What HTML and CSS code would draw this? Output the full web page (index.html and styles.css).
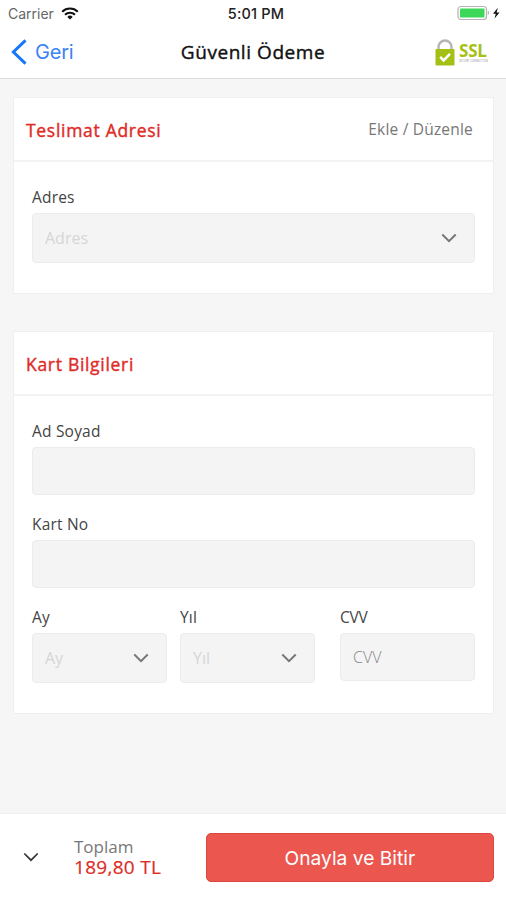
FILE: index.html
```html
<!DOCTYPE html>
<html lang="tr">
<head>
    <meta charset="UTF-8">
    <meta name="viewport" content="width=device-width, initial-scale=1.0">
    <title>Güvenli Ödeme</title>
    <link rel="stylesheet" href="styles.css">
</head>
<body>

    <div class="screen">
        <div class="status-bar">
            <div class="carrier">
                <span>Carrier</span>
                <svg width="18" height="13" viewBox="0 0 18 13" fill="none" stroke="#111" stroke-width="2.1">
                    <path d="M1.2 4.7a11.2 11.2 0 0 1 15.6 0"/>
                    <path d="M4 7.8a7.2 7.2 0 0 1 10 0"/>
                    <path d="M9 12.6L6.3 9.9a3.9 3.9 0 0 1 5.4 0z" fill="#111" stroke="none"/>
                </svg>
            </div>
            <span class="clock">5:01 PM</span>
            <div class="battery">
                <svg width="44" height="16" viewBox="0 0 44 16">
                    <rect x="1" y="1.5" width="28.5" height="13" rx="3" fill="#fff" stroke="#b4b4b4" stroke-width="1.2"/>
                    <rect x="3" y="3.5" width="24.5" height="9" rx="1" fill="#3dd75a"/>
                    <path d="M30.8 5.8c1.6.6 1.6 3.8 0 4.4z" fill="#b4b4b4"/>
                    <path d="M40.8 2.8l-4.8 6h2.8l-1.3 4.7 5-6.1h-2.9z" fill="#111"/>
                </svg>
            </div>
        </div>

        <header class="nav-bar">
            <a href="#" class="back">
                <svg width="16" height="26" viewBox="0 0 16 26" fill="none" stroke="#1478f8" stroke-width="3">
                    <path d="M14.5 1.4L2.4 13l12.1 11.6"/>
                </svg>
                <span>Geri</span>
            </a>
            <h1>Güvenli Ödeme</h1>
            <div class="ssl">
                <svg width="20" height="28" viewBox="0 0 20 28">
                    <path d="M3.5 13V9a6.5 6.5 0 0 1 13 0v4" fill="none" stroke="#b5b5b5" stroke-width="2.4"/>
                    <rect x="0.5" y="11" width="19" height="16.5" rx="1" fill="#a5c014"/>
                    <path d="M5.2 18.8l3.4 3.6 6.4-6.6" fill="none" stroke="#fff" stroke-width="2.5"/>
                </svg>
                <div class="ssl-text">
                    <b>SSL</b>
                    <small>SECURE CONNECTION</small>
                </div>
            </div>
        </header>

        <main>
            <section class="card address">
                <div class="card-head">
                    <h2>Teslimat Adresi</h2>
                    <a href="#">Ekle / Düzenle</a>
                </div>
                <div class="card-body">
                    <div class="group">
                        <label>Adres</label>
                        <div class="field select">
                            <span>Adres</span>
                            <svg class="chevron" width="16" height="10" viewBox="0 0 16 10"><path d="M1.3 1.5L8 8.2l6.7-6.7"/></svg>
                        </div>
                    </div>
                </div>
            </section>

            <section class="card payment">
                <div class="card-head">
                    <h2>Kart Bilgileri</h2>
                </div>
                <div class="card-body">
                    <div class="group">
                        <label>Ad Soyad</label>
                        <div class="field"></div>
                    </div>
                    <div class="group">
                        <label>Kart No</label>
                        <div class="field"></div>
                    </div>
                    <div class="row">
                        <div class="group">
                            <label>Ay</label>
                            <div class="field select">
                                <span>Ay</span>
                                <svg class="chevron" width="16" height="10" viewBox="0 0 16 10"><path d="M1.3 1.5L8 8.2l6.7-6.7"/></svg>
                            </div>
                        </div>
                        <div class="group">
                            <label>Yıl</label>
                            <div class="field select">
                                <span>Yıl</span>
                                <svg class="chevron" width="16" height="10" viewBox="0 0 16 10"><path d="M1.3 1.5L8 8.2l6.7-6.7"/></svg>
                            </div>
                        </div>
                        <div class="group cvv">
                            <label>CVV</label>
                            <div class="field"><span>CVV</span></div>
                        </div>
                    </div>
                </div>
            </section>
        </main>

        <footer class="checkout">
            <svg class="chevron dark" width="16" height="10" viewBox="0 0 16 10"><path d="M1.3 1.5L8 8.2l6.7-6.7"/></svg>
            <div class="total">
                <span>Toplam</span>
                <strong>189,80 TL</strong>
            </div>
            <button class="confirm-btn">Onayla ve Bitir</button>
        </footer>
    </div>

</body>
</html>
```

FILE: styles.css
```css
* {
    margin: 0;
    padding: 0;
    box-sizing: border-box;
}
body {
    font-family: "Open Sans", sans-serif;
    background-color: #f6f6f6;
}
svg {
    display: block;
    flex: none;
}
.screen {
    width: 506px;
    height: 900px;
    display: flex;
    flex-direction: column;
}
.status-bar {
    height: 26px;
    padding: 0 5px 0 8px;
    background-color: #fff;
    display: grid;
    grid-template-columns: 1fr auto 1fr;
    align-items: center;
    font-family: Inter, sans-serif;
}
.carrier {
    display: flex;
    align-items: center;
    gap: 7px;
    font-size: 14px;
    color: #666;
}
.clock {
    padding-left: 3px;
    font-size: 14.5px;
    font-weight: 500;
    letter-spacing: 0.2px;
    color: #222;
}
.battery {
    display: flex;
    justify-content: flex-end;
}
.nav-bar {
    height: 53px;
    padding: 0 18px 0 11px;
    background-color: #fff;
    border-bottom: 1px solid #dedede;
    display: grid;
    grid-template-columns: 1fr auto 1fr;
    align-items: center;
}
.back {
    display: flex;
    align-items: center;
    gap: 8px;
    color: #3b82f6;
    font-family: Inter, sans-serif;
    font-size: 20px;
    letter-spacing: -0.2px;
    text-decoration: none;
}
.nav-bar h1 {
    padding-left: 7px;
    font-size: 19px;
    font-weight: 400;
    letter-spacing: 0.55px;
    color: #111;
    -webkit-text-stroke: 0.4px #111;
}
.ssl {
    display: flex;
    justify-content: flex-end;
    align-items: center;
    gap: 4px;
}
.ssl-text {
    width: 29px;
}
.ssl-text b {
    display: block;
    font-size: 17px;
    line-height: 17px;
    letter-spacing: -0.2px;
    color: #a5c014;
}
.ssl-text small {
    display: block;
    font-size: 2.8px;
    line-height: 4px;
    white-space: nowrap;
    color: #999;
}
main {
    flex: 1;
    padding: 18px 12px 0 13px;
}
.card {
    background-color: #fff;
    border: 1px solid #efefef;
}
.address {
    height: 197px;
    margin-bottom: 37px;
}
.payment {
    height: 383px;
}
.card-head {
    height: 64px;
    padding: 0 20px 0 12px;
    border-bottom: 2px solid #f3f3f3;
    display: flex;
    justify-content: space-between;
    align-items: center;
}
.card-head h2 {
    padding-top: 1px;
    font-size: 17.5px;
    font-weight: 400;
    letter-spacing: 0.7px;
    color: #e02b27;
    -webkit-text-stroke: 0.4px #e02b27;
}
.card-head a {
    font-size: 15.5px;
    letter-spacing: 0.2px;
    color: #777;
    text-decoration: none;
}
.card-body {
    padding: 25px 18px 0;
}
.group label {
    display: block;
    height: 26px;
    line-height: 20px;
    font-size: 15.5px;
    letter-spacing: 0.2px;
    color: #444;
}
.field {
    height: 48px;
    padding: 0 17px 0 12px;
    background-color: #f4f4f4;
    border: 1px solid #ececec;
    border-radius: 4px;
    display: flex;
    justify-content: space-between;
    align-items: center;
    font-size: 16px;
    color: #d6d6d6;
}
.select {
    height: 50px;
}
.card-body > .group {
    margin-bottom: 19px;
}
.row {
    display: flex;
    gap: 13px;
}
.row .group {
    width: 135px;
}
.row .cvv {
    margin-left: auto;
}
.row .cvv label {
    letter-spacing: -0.2px;
}
.cvv .field {
    font-weight: 300;
    color: #888;
}
.chevron {
    fill: none;
    stroke: #777;
    stroke-width: 2;
}
.dark {
    stroke: #333;
    stroke-width: 1.7;
}
.checkout {
    height: 87px;
    padding: 0 12px 0 23px;
    background-color: #fff;
    border-top: 1px solid #efefef;
    display: flex;
    align-items: center;
}
.total {
    width: 132px;
    margin-left: 35px;
}
.total span,
.total strong {
    display: block;
    line-height: 21px;
}
.total span {
    font-size: 17px;
    color: #777;
}
.total strong {
    font-size: 19px;
    font-weight: 400;
    letter-spacing: 0.3px;
    color: #e02b27;
    -webkit-text-stroke: 0.2px #e02b27;
}
.confirm-btn {
    width: 289px;
    height: 49px;
    padding-top: 1px;
    background-color: #eb564f;
    border: 1px solid #dc463e;
    border-radius: 5px;
    font-family: Inter, sans-serif;
    font-size: 19.2px;
    color: #fff;
}
```
